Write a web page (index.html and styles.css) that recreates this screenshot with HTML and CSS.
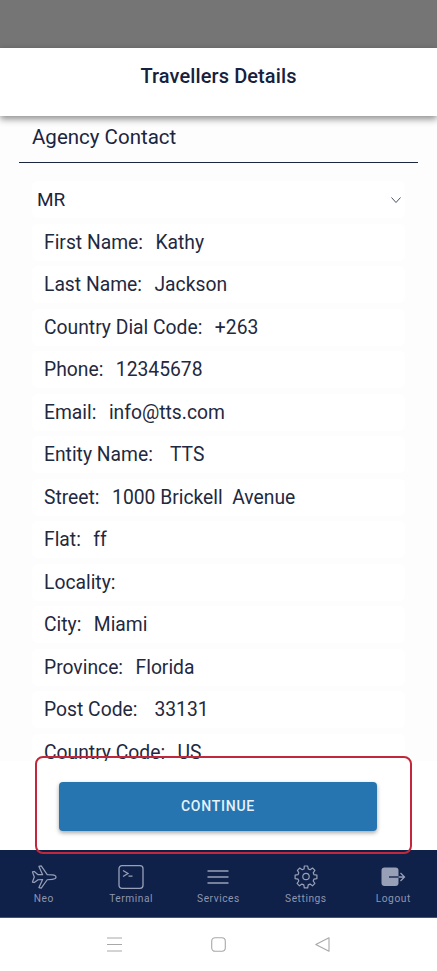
FILE: index.html
```html
<!DOCTYPE html>
<html lang="en">
<head>
<meta charset="utf-8">
<title>Travellers Details</title>
<link rel="stylesheet" href="styles.css">
</head>
<body>
<div class="app">
  <div class="status"></div>
  <header class="header"><h1>Travellers Details</h1></header>
  <main class="content">
    <h2 class="section">Agency Contact</h2>
    <div class="form">
      <div class="select"><span>MR</span>
        <svg class="chev" width="10" height="8" viewBox="0 0 10 8"><path d="M0.5 1.5 5 6.5 9.5 1.5" fill="none" stroke="#1b2540" stroke-width="0.8"/></svg>
      </div>
      <div class="row"><span class="lab">First Name:</span><span class="val">Kathy</span></div>
      <div class="row"><span class="lab">Last Name:</span><span class="val">Jackson</span></div>
      <div class="row"><span class="lab">Country Dial Code:</span><span class="val">+263</span></div>
      <div class="row"><span class="lab">Phone:</span><span class="val">12345678</span></div>
      <div class="row"><span class="lab">Email:</span><span class="val">info@tts.com</span></div>
      <div class="row"><span class="lab">Entity Name:</span><span class="val wide">TTS</span></div>
      <div class="row"><span class="lab">Street:</span><span class="val">1000 Brickell&nbsp; Avenue</span></div>
      <div class="row"><span class="lab">Flat:</span><span class="val">ff</span></div>
      <div class="row"><span class="lab">Locality:</span></div>
      <div class="row"><span class="lab">City:</span><span class="val">Miami</span></div>
      <div class="row"><span class="lab">Province:</span><span class="val">Florida</span></div>
      <div class="row"><span class="lab">Post Code:</span><span class="val wide">33131</span></div>
      <div class="row"><span class="lab">Country Code:</span><span class="val">US</span></div>
    </div>
    <div class="cta"><button class="continue" type="button">CONTINUE</button></div>
  </main>
  <nav class="tabs">
    <div class="tab">
      <svg width="26" height="24" viewBox="0 0 28 26" fill="none" stroke="#98a0b8" stroke-width="1.3" stroke-linejoin="round"><path d="M1.5 7.5 3.5 7 7.5 10.5 12.5 10.5 8.5 1.5 11 1 17.5 10.5 23 10.8C25.5 11 27 12.3 27 13.3 27 14.3 25.5 15.3 23 15.5L17.5 16 11 25 8.5 24.5 12.5 15.8 7.5 16 3.5 19 1.5 18.5 3.5 13Z"/></svg>
      <span>Neo</span>
    </div>
    <div class="tab">
      <svg width="26" height="24" viewBox="0 0 26 24" fill="none" stroke="#98a0b8" stroke-width="1.3"><rect x="1" y="0.7" width="24" height="22.6" rx="3"/><path d="M5 5.5 10 8.5 5 11.5M10.5 11.2H14.5"/></svg>
      <span>Terminal</span>
    </div>
    <div class="tab">
      <svg width="26" height="24" viewBox="0 0 26 24" fill="none" stroke="#98a0b8" stroke-width="1.6"><path d="M2.5 6H23.5M2.5 12H23.5M2.5 18H23.5"/></svg>
      <span>Services</span>
    </div>
    <div class="tab">
      <svg width="26" height="24" viewBox="0 0 24 24" fill="none" stroke="#98a0b8" stroke-width="1.2" stroke-linejoin="round"><path d="M10.3 1h3.4l.5 2.9 1.9.8 2.4-1.7 2.4 2.4-1.7 2.4.8 1.9 2.9.5v3.4l-2.9.5-.8 1.9 1.7 2.4-2.4 2.4-2.4-1.7-1.9.8-.5 2.9h-3.4l-.5-2.9-1.9-.8-2.4 1.7-2.4-2.4 1.7-2.4-.8-1.9-2.9-.5v-3.4l2.9-.5.8-1.9L3.4 5.4l2.4-2.4 2.4 1.7 1.9-.8z"/><circle cx="12" cy="11.5" r="3.2"/></svg>
      <span>Settings</span>
    </div>
    <div class="tab">
      <svg width="26" height="24" viewBox="0 0 26 24"><rect x="1.5" y="2.5" width="17" height="18.5" rx="3" fill="#98a0b8"/><path d="M18.5 12H24.5M20.5 8 24.5 12 20.5 16" fill="none" stroke="#98a0b8" stroke-width="1.3"/><path d="M9 12H18.5" stroke="#0f2049" stroke-width="1.3"/></svg>
      <span>Logout</span>
    </div>
  </nav>
  <div class="sysbar">
    <svg width="15" height="15" viewBox="0 0 15 15" fill="none" stroke="#a8a8a8" stroke-width="1"><path d="M0 1H15M0 7.5H15M0 14H15"/></svg>
    <svg width="15" height="15" viewBox="0 0 15 15" fill="none" stroke="#a8a8a8" stroke-width="1.1"><rect x="0.7" y="0.7" width="13.6" height="13.6" rx="3.5"/></svg>
    <svg width="15" height="15" viewBox="0 0 15 15" fill="none" stroke="#a8a8a8" stroke-width="1.1" stroke-linejoin="round"><path d="M14 0.7V14.3L0.8 7.5Z"/></svg>
  </div>
  <div class="annotation"></div>
</div>
</body>
</html>
```
FILE: styles.css
```css
* { box-sizing: border-box; }
html, body { margin: 0; padding: 0; }
body { font-family: Roboto, "Liberation Sans", sans-serif; color: #1b2540; background: #fff; }
.app { position: relative; width: 437px; height: 971px; display: flex; flex-direction: column; overflow: hidden; }
.status { height: 48px; background: #757575; flex: none; }
.header { height: 68px; flex: none; background: #fff; box-shadow: 0 3px 7px rgba(0,0,0,.45); position: relative; z-index: 2; padding-top: 15px; text-align: center; }
.header h1 { margin: 0; font-size: 20px; line-height: 26px; font-weight: 500; letter-spacing: .1px; color: #17213d; }
.content { flex: 1; position: relative; background: #fefdfe; padding: 7px 19px 0; overflow: hidden; }
.section { margin: 0; padding: 0 0 11px 13px; font-size: 20.5px; line-height: 28px; font-weight: 400; color: #1b2540; border-bottom: 1px solid #1b2540; }
.form { padding: 18px 13px 0; display: flex; flex-direction: column; gap: 5.5px; }
.select { height: 37px; background: #fff; border-radius: 6px; display: flex; align-items: center; justify-content: space-between; padding: 0 4px 0 5px; font-size: 19px; }
.row { height: 37px; background: #fff; border-radius: 6px; display: flex; align-items: center; padding-left: 12px; font-size: 19.3px; color: #1f2940; }
.val { margin-left: 12.5px; }
.val.wide { margin-left: 17px; }
.cta { position: absolute; left: 0; right: 0; bottom: 0; height: 89px; background: #fff; display: flex; justify-content: center; padding: 21px 1px 0 0; }
.continue { width: 318px; height: 49px; padding: 0 0 2px; border: 0; border-radius: 4px; background: #2675b0; color: #e8f2f8; font: 500 14px Roboto, "Liberation Sans", sans-serif; letter-spacing: .75px; box-shadow: 0 2px 4px rgba(0,0,0,.35); }
.tabs { height: 68px; flex: none; background: #0f2049; border-bottom: 1px solid #46546f; display: grid; grid-template-columns: repeat(5, 87.4px); position: relative; z-index: 1; }
.tab { display: flex; flex-direction: column; align-items: center; padding-top: 15px; color: #8e96b0; font-size: 10.2px; line-height: 12px; letter-spacing: .55px; gap: 4px; }
.tab svg { display: block; flex: none; }
.sysbar { height: 53px; flex: none; background: #fff; display: flex; justify-content: center; gap: 89px; padding-top: 19px; align-items: flex-start; }
.annotation { position: absolute; left: 35px; top: 756px; width: 377px; height: 98px; border: 2px solid #c2283c; border-radius: 8px; z-index: 3; }
```
